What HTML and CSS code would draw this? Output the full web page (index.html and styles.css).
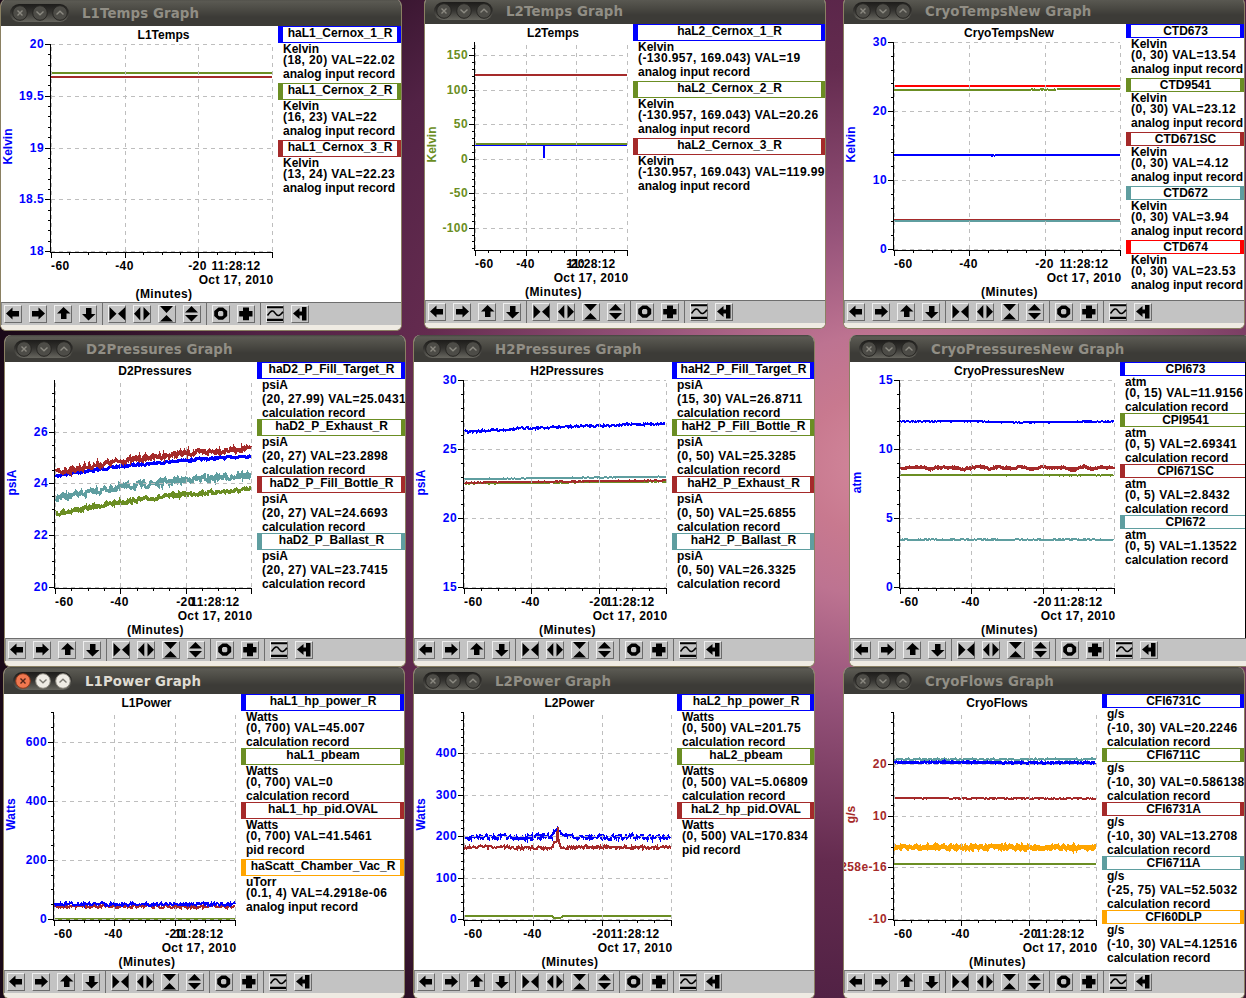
FILE: index.html
```html
<!DOCTYPE html>
<html lang="en">
<head>
    <meta charset="UTF-8">
    <meta name="viewport" content="width=device-width, initial-scale=1.0">
    <title>Graphs</title>
    <link rel="stylesheet" href="styles.css">
</head>
<body>

    <div class="desktop" id="desktop">
        <!-- The graph windows are generated by script.js -->
    </div>

    <div class="screen-edge"></div>

    <script src="script.js"></script>
</body>
</html>
```

FILE: styles.css
```css
body {
    margin: 0;
    padding: 0;
    overflow: hidden;
    font-family: "Liberation Sans", Arial, sans-serif;
}

.desktop {
    position: relative;
    width: 1246px;
    height: 998px;
    overflow: hidden;
    background: radial-gradient(900px 740px at 890px 465px, #d48a9e 0%, #c8798f 10%, #bd7391 18%, #96537a 32%, #642b4f 54%, #522245 72%, #2c1025 90%, #1a0918 100%);
}

/* Windows */
.window {
    position: absolute;
    width: 400px;
    border: 1px solid #8a8062;
    border-top: none;
    border-radius: 7px 7px 6px 6px;
    overflow: hidden;
    background: #efebe3;
}

.titlebar {
    display: flex;
    align-items: center;
    height: 27px;
    background: linear-gradient(#45443f 0, #5b5a53 2px, #4a4943 11px, #3c3b37 18px, #3c3b37 100%);
}

.window-buttons {
    display: flex;
    align-items: center;
    gap: 4px;
    height: 18px;
    margin-left: 9px;
    padding: 0 1px 0 2px;
    border-radius: 9px;
    background: linear-gradient(#1d1c1a, #33322f 45%, #67665f);
}

.window-buttons svg {
    display: block;
    width: 16px;
    height: 16px;
}

.window-title {
    margin-left: 13px;
    padding-top: 2px;
    font: bold 13.33px/25px "DejaVu Sans", sans-serif;
    letter-spacing: 0.1px;
    color: #918e85;
    white-space: nowrap;
}

.active .window-title {
    color: #dfdbd2;
}

/* Graph area */
.graph {
    display: flex;
    height: 276px;
    background: #fff;
}

.plot {
    display: block;
    flex: none;
    font-size: 12px;
    font-weight: bold;
}

.wide {
    letter-spacing: 0.4px;
}

.time {
    letter-spacing: 0.2px;
}

.axis {
    stroke: #000;
    stroke-width: 1;
    fill: none;
    shape-rendering: crispEdges;
}

.grid {
    stroke: #bebebe;
    stroke-width: 1;
    stroke-dasharray: 4 4;
    fill: none;
    shape-rendering: crispEdges;
}

.series {
    fill: none;
    shape-rendering: crispEdges;
}

/* Legend */
.legend {
    flex: 1;
    min-width: 0;
    overflow: hidden;
    font-size: 12px;
    font-weight: bold;
    line-height: 12px;
    white-space: nowrap;
}

.legend-name {
    box-sizing: border-box;
    height: 14px;
    border: 1px solid;
    border-left-width: 5px;
    border-right-width: 4px;
    text-align: center;
    display: flex;
    justify-content: center;
}

.legend-name span {
    color: #000;
}

.legend-name.deep {
    height: 17px;
}

.legend-unit {
    height: 11px;
    padding-left: 5px;
}

.legend-unit.deep {
    height: 14px;
}

.legend-value {
    height: 14px;
    padding-left: 5px;
    letter-spacing: 0.4px;
}

.legend-record {
    height: 12px;
    padding-left: 5px;
}

.legend-record.deep {
    height: 15px;
}

/* Toolbar */
.toolbar {
    display: flex;
    align-items: center;
    gap: 7px;
    box-sizing: border-box;
    height: 23px;
    padding-left: 2px;
    border-top: 1px solid #6e6e6e;
    border-left: 1px solid #8a8a8a;
    background: #c3c3c3;
}

.tool {
    display: block;
    box-sizing: border-box;
    width: 18px;
    height: 18px;
    border: 1px solid;
    border-color: #efefef #6b6b6b #6b6b6b #efefef;
}

.tool svg {
    display: block;
    width: 18px;
    height: 18px;
    margin: -1px;
}

.separator {
    width: 1px;
    height: 22px;
    margin: 0 -2px;
    background: #6e6e6e;
}

.window-foot {
    height: 5px;
    background: #efebe3;
}

.screen-edge {
    position: absolute;
    left: 1245px;
    top: 362px;
    width: 1px;
    height: 276px;
    background: #000;
}
```

FILE: script.js
```
const BLUE = '#0000ff';
const OLIVE = '#6b8e23';
const BROWN = '#a52a2a';
const TEAL = '#5f9ea0';
const RED = '#ff0000';
const ORANGE = '#ffa500';

const TOP = 18;      // first grid row inside the graph area
const HEIGHT = 207;  // height of the y axis
const LEFT = 50;     // x of the -60 minute mark

// pts: [fraction of the time axis, y], w: line width, n: noise
const windows = [
    {
        x: 1, y: 26, title: 'L1Temps', split: 277, unit: 'Kelvin', axisColor: BLUE,
        range: [18, 20], major: 0.5, minor: 0.1,
        legend: [
            [BLUE, 'haL1_Cernox_1_R', 'Kelvin', '(18, 20) VAL=22.02', 'analog input record'],
            [OLIVE, 'haL1_Cernox_2_R', 'Kelvin', '(16, 23) VAL=22', 'analog input record'],
            [BROWN, 'haL1_Cernox_3_R', 'Kelvin', '(13, 24) VAL=22.23', 'analog input record']
        ],
        series: [
            { c: OLIVE, w: 2, n: 0, pts: [[0, 47], [1, 47]] },
            { c: BROWN, w: 2, n: 0, pts: [[0, 51], [1, 51]] }
        ]
    },
    {
        x: 425, y: 24, title: 'L2Temps', split: 208, unit: 'Kelvin', axisColor: OLIVE,
        range: [-130.957, 169.043], major: 50, minor: 10,
        legend: [
            [BLUE, 'haL2_Cernox_1_R', 'Kelvin', '(-130.957, 169.043) VAL=19', 'analog input record'],
            [OLIVE, 'haL2_Cernox_2_R', 'Kelvin', '(-130.957, 169.043) VAL=20.26', 'analog input record'],
            [BROWN, 'haL2_Cernox_3_R', 'Kelvin', '(-130.957, 169.043) VAL=119.99', 'analog input record']
        ],
        series: [
            { c: BLUE, w: 2, n: 0, pts: [[0, 121], [0.454, 121], [0.454, 134], [0.455, 121], [1, 121]] },
            { c: OLIVE, w: 2, n: 0, pts: [[0, 120], [1, 120]] },
            { c: BROWN, w: 2, n: 0, pts: [[0, 51], [1, 51]] }
        ]
    },
    {
        x: 844, y: 24, title: 'CryoTempsNew', split: 282, unit: 'Kelvin', axisColor: BLUE,
        range: [0, 30], major: 10, minor: 2,
        legend: [
            [BLUE, 'CTD673', 'Kelvin', '(0, 30) VAL=13.54', 'analog input record'],
            [OLIVE, 'CTD9541', 'Kelvin', '(0, 30) VAL=23.12', 'analog input record'],
            [BROWN, 'CTD671SC', 'Kelvin', '(0, 30) VAL=4.12', 'analog input record'],
            [TEAL, 'CTD672', 'Kelvin', '(0, 30) VAL=3.94', 'analog input record'],
            [RED, 'CTD674', 'Kelvin', '(0, 30) VAL=23.53', 'analog input record']
        ],
        series: [
            { c: BLUE, w: 2, n: 0, pts: [[0, 131], [0.43, 131], [0.435, 132], [0.44, 131], [0.445, 132], [0.45, 131], [1, 131]] },
            { c: OLIVE, w: 2, n: 0, pts: [[0, 66], [0.6, 66]] },
            { c: OLIVE, w: 2, n: 0.6, pts: [[0.6, 65.5], [0.72, 65.5]] },
            { c: OLIVE, w: 2, n: 0, pts: [[0.72, 65], [1, 65]] },
            { c: BROWN, w: 2, n: 0, pts: [[0, 196], [1, 196]] },
            { c: TEAL, w: 2, n: 0, pts: [[0, 197], [1, 197]] },
            { c: RED, w: 2, n: 0, pts: [[0, 62], [1, 62]] }
        ]
    },
    {
        x: 5, y: 362, title: 'D2Pressures', split: 252, unit: 'psiA', axisColor: BLUE,
        range: [20, 27.99], major: 2, minor: 0.5,
        legend: [
            [BLUE, 'haD2_P_Fill_Target_R', 'psiA', '(20, 27.99) VAL=25.0431', 'calculation record'],
            [OLIVE, 'haD2_P_Exhaust_R', 'psiA', '(20, 27) VAL=23.2898', 'calculation record'],
            [BROWN, 'haD2_P_Fill_Bottle_R', 'psiA', '(20, 27) VAL=24.6693', 'calculation record'],
            [TEAL, 'haD2_P_Ballast_R', 'psiA', '(20, 27) VAL=23.7415', 'calculation record']
        ],
        series: [
            { c: BLUE, w: 3, n: 1.2, pts: [[0, 114], [0.33, 104.3], [0.66, 98.3], [1, 94]] },
            { c: OLIVE, w: 3, n: 2.2, pts: [[0, 151.7], [0.33, 140.3], [0.66, 132.3], [1, 127.7]] },
            { c: BROWN, w: 3, n: 3, pts: [[0, 110.5], [0.33, 99], [0.66, 91.5], [1, 86.3]] },
            { c: TEAL, w: 3, n: 3.6, pts: [[0, 136.5], [0.33, 125.3], [0.66, 118], [1, 113]] }
        ]
    },
    {
        x: 414, y: 362, title: 'H2Pressures', split: 258, unit: 'psiA', axisColor: BLUE,
        range: [15, 30], major: 5, minor: 1,
        legend: [
            [BLUE, 'haH2_P_Fill_Target_R', 'psiA', '(15, 30) VAL=26.8711', 'calculation record'],
            [OLIVE, 'haH2_P_Fill_Bottle_R', 'psiA', '(0, 50) VAL=25.3285', 'calculation record'],
            [BROWN, 'haH2_P_Exhaust_R', 'psiA', '(0, 50) VAL=25.6855', 'calculation record'],
            [TEAL, 'haH2_P_Ballast_R', 'psiA', '(0, 50) VAL=26.3325', 'calculation record']
        ],
        series: [
            { c: BLUE, w: 2, n: 1.5, pts: [[0, 70], [0.33, 66], [0.66, 63.5], [1, 61.5]] },
            { c: OLIVE, w: 2, n: 0.4, pts: [[0, 121.5], [1, 119.5]] },
            { c: BROWN, w: 2, n: 0.5, pts: [[0, 120.6], [1, 118.4]] },
            { c: TEAL, w: 2, n: 0.4, pts: [[0, 117.2], [0.35, 116.2], [1, 114.7]] }
        ]
    },
    {
        x: 850, y: 362, title: 'CryoPressuresNew', split: 270, unit: 'atm', axisColor: BLUE,
        range: [0, 15], major: 5, minor: 1,
        legend: [
            [BLUE, 'CPI673', 'atm', '(0, 15) VAL=11.9156', 'calculation record'],
            [OLIVE, 'CPI9541', 'atm', '(0, 5) VAL=2.69341', 'calculation record'],
            [BROWN, 'CPI671SC', 'atm', '(0, 5) VAL=2.8432', 'calculation record'],
            [TEAL, 'CPI672', 'atm', '(0, 5) VAL=1.13522', 'calculation record']
        ],
        series: [
            { c: BLUE, w: 2, n: 0.5, pts: [[0, 59.7], [0.3, 59], [0.5, 60.5], [0.7, 60.3], [0.85, 59.7], [1, 59.5]] },
            { c: OLIVE, w: 2, n: 0.4, pts: [[0, 113], [1, 113.4]] },
            { c: BROWN, w: 3, n: 1, pts: [[0, 106], [0.08, 105], [0.14, 106.5], [0.18, 105.3], [0.25, 105.5], [0.3, 107], [0.33, 105.8], [0.37, 104.5], [0.42, 107], [0.46, 104.5], [0.52, 107], [0.57, 104.7], [0.62, 107.5], [0.66, 104.5], [0.7, 105.8], [0.77, 105.5], [0.81, 108], [0.86, 104.5], [0.9, 107], [0.94, 105.5], [1, 105.7]] },
            { c: TEAL, w: 2, n: 0.7, pts: [[0, 177.7], [1, 177.7]] }
        ]
    },
    {
        x: 4, y: 694, title: 'L1Power', split: 237, unit: 'Watts', axisColor: BLUE, active: true,
        range: [0, 700], major: 200, minor: 50,
        legend: [
            [BLUE, 'haL1_hp_power_R', 'Watts', '(0, 700) VAL=45.007', 'calculation record'],
            [OLIVE, 'haL1_pbeam', 'Watts', '(0, 700) VAL=0', 'calculation record'],
            [BROWN, 'haL1_hp_pid.OVAL', 'Watts', '(0, 700) VAL=41.5461', 'pid record'],
            [ORANGE, 'haScatt_Chamber_Vac_R', 'uTorr', '(0.1, 4) VAL=4.2918e-06', 'analog input record']
        ],
        series: [
            { c: OLIVE, w: 2, n: 0, pts: [[0, 225], [1, 225]] },
            { c: BROWN, w: 2, n: 2, pts: [[0, 212.5], [1, 212.5]] },
            { c: BLUE, w: 2, n: 2, pts: [[0, 210], [1, 210.3]] }
        ]
    },
    {
        x: 414, y: 694, title: 'L2Power', split: 263, unit: 'Watts', axisColor: BLUE,
        range: [0, 500], major: 100, minor: 20, skipTop: true,
        legend: [
            [BLUE, 'haL2_hp_power_R', 'Watts', '(0, 500) VAL=201.75', 'calculation record'],
            [OLIVE, 'haL2_pbeam', 'Watts', '(0, 500) VAL=5.06809', 'calculation record'],
            [BROWN, 'haL2_hp_pid.OVAL', 'Watts', '(0, 500) VAL=170.834', 'pid record']
        ],
        series: [
            { c: BLUE, w: 2, n: 3.2, pts: [[0, 143], [0.425, 143], [0.435, 137.5], [0.45, 135], [0.47, 139], [0.5, 143], [1, 143.3]] },
            { c: OLIVE, w: 2, n: 0, pts: [[0, 222], [0.425, 222], [0.435, 224], [0.465, 224], [0.48, 222], [1, 222]] },
            { c: BROWN, w: 2, n: 2, pts: [[0, 153], [0.425, 154], [0.435, 148], [0.449, 147], [0.453, 134], [0.457, 147], [0.47, 153], [1, 154]] }
        ]
    },
    {
        x: 844, y: 694, title: 'CryoFlows', split: 258, unit: 'g/s', axisColor: BROWN,
        range: [-10, 30], major: 10, minor: 2, zero: '258e-16', skipTop: true,
        legend: [
            [BLUE, 'CFI6731C', 'g/s', '(-10, 30) VAL=20.2246', 'calculation record'],
            [OLIVE, 'CFI6711C', 'g/s', '(-10, 30) VAL=0.586138', 'calculation record'],
            [BROWN, 'CFI6731A', 'g/s', '(-10, 30) VAL=13.2708', 'calculation record'],
            [TEAL, 'CFI6711A', 'g/s', '(-25, 75) VAL=52.5032', 'calculation record'],
            [ORANGE, 'CFI60DLP', 'g/s', '(-10, 30) VAL=4.12516', 'calculation record']
        ],
        series: [
            { c: BLUE, w: 3, n: 0.9, pts: [[0, 68.7], [0.3, 68], [0.6, 69], [1, 68.8]] },
            { c: OLIVE, w: 2, n: 0, pts: [[0, 170], [1, 170]] },
            { c: BROWN, w: 2, n: 0.5, pts: [[0, 104.2], [1, 104.6]] },
            { c: TEAL, w: 2, n: 1, pts: [[0, 65.3], [1, 65.3]] },
            { c: ORANGE, w: 4, n: 2, pts: [[0, 153], [1, 153.8]] }
        ]
    }
];

const icons = {
    left: '<path d="M2 8.5L8.5 2.5V6H15V11.5H8.5V14.5Z"/>',
    right: '<path d="M16 8.5L9.5 2.5V6H3V11.5H9.5V14.5Z"/>',
    up: '<path d="M9.5 2L3 8.5H7V14H12.5V8.5H16.5Z"/>',
    down: '<path d="M9.5 15.5L3 9H7V3H12.5V9H16.5Z"/>',
    squeezeX: '<path d="M1.5 2V15.5L8.5 8.7ZM17.3 2V15.5L10 8.7Z"/>',
    spreadX: '<path d="M7.3 2V15.5L1 8.7ZM10.5 2V15.5L17 8.7Z"/>',
    squeezeY: '<path d="M2 1H15L8.5 8ZM2 16.5H15L8.5 10Z"/>',
    spreadY: '<path d="M2 7.5H15L8.5 1ZM2 10H15L8.5 16.5Z"/>',
    ring: '<path fill-rule="evenodd" d="M6.5 2.5H11L15.2 6V11L11 14.8H6.5L2.2 11V6ZM7.2 6L6 7.2V10.2L7.2 11.3H10.2L11.3 10.2V7.2L10.2 6Z"/>',
    plus: '<path d="M6 2.5H12V6H15.5V11.5H12V15.2H6V11.5H2.2V6H6Z"/>',
    wave: '<path d="M1 1.2H17V3.2H1ZM1 13.7H17V16H1Z"/><path fill="none" stroke="#000" stroke-width="1.5" d="M1.5 10.5C5 5.5 7 4.5 9 8C11.5 11.5 13.5 11.5 17 6.8"/>',
    stop: '<path d="M2 8.5L8.5 3V6.5H11V2H15.5V15.5H11V10.5H8.5V14Z"/>'
};

const toolbar = ['left', 'right', 'up', 'down', '|', 'squeezeX', 'spreadX', 'squeezeY', 'spreadY', '|', 'ring', 'plus', '|', 'wave', 'stop'];

let seed = 7;
function random() {
    seed = (seed * 16807) % 2147483647;
    return seed / 2147483647;
}

function linePoints(s, width) {
    if (!s.n) {
        return s.pts.map(p => `${LEFT + p[0] * width},${p[1]}`).join(' ');
    }
    const out = [];
    let drift = 0;
    for (let i = 0; i < s.pts.length - 1; i++) {
        const [a, ya] = s.pts[i];
        const [b, yb] = s.pts[i + 1];
        for (let x = a * width; x < b * width; x += 0.8) {
            const t = (x - a * width) / ((b - a) * width);
            drift = drift * 0.35 + (random() - 0.5) * s.n * 1.5;
            out.push(`${(LEFT + x).toFixed(1)},${(ya + (yb - ya) * t + drift).toFixed(1)}`);
        }
    }
    return out.join(' ');
}

function plotSvg(w) {
    const right = w.split - 6;
    const width = right - LEFT;
    const [min, max] = w.range;
    const bottom = TOP + HEIGHT;
    const yPos = v => Math.round(TOP + (max - v) * HEIGHT / (max - min)) + 0.5;
    const xPos = m => Math.round(LEFT + (60 + m) * width / 60) + 0.5;
    let grid = '';
    let ticks = '';
    let text = '';

    // y axis
    for (let i = Math.ceil(min / w.minor - 0.001); i <= max / w.minor + 0.001; i++) {
        ticks += `M47 ${yPos(i * w.minor)}H50`;
    }
    for (let i = Math.ceil(min / w.major); i <= max / w.major; i++) {
        const v = i * w.major;
        if (w.skipTop && v === max) continue;
        const y = yPos(v);
        ticks += `M44 ${y}H50`;
        grid += `M50 ${y}H${right}`;
        const label = v === 0 && w.zero ? w.zero : String(v);
        text += `<text class="wide" x="43" y="${y + 3.5}" text-anchor="end" fill="${w.axisColor}">${label}</text>`;
    }

    // x axis
    for (let m = -60; m <= 0; m += 5) {
        const major = m % 20 === 0;
        ticks += `M${xPos(m)} ${bottom + 1}V${bottom + (major ? 7 : 4)}`;
        if (major) grid += `M${xPos(m)} ${bottom}V${TOP}`;
    }
    text += `<text class="wide" x="50" y="244">-60</text>`;
    text += `<text class="wide" x="${xPos(-40) - 1}" y="244" text-anchor="middle">-40</text>`;
    text += `<text class="wide" x="${xPos(-20) - 1}" y="244" text-anchor="middle">-20</text>`;
    text += `<text class="time" x="${right - 11.5}" y="244" text-anchor="end">11:28:12</text>`;
    text += `<text class="wide" x="${right + 1.5}" y="258" text-anchor="end">Oct 17, 2010</text>`;
    text += `<text class="wide" x="${LEFT + width / 2 + 2.5}" y="272" text-anchor="middle">(Minutes)</text>`;
    text += `<text x="${LEFT + width / 2 + 2}" y="13" text-anchor="middle">${w.title}</text>`;
    text += `<text transform="translate(11 120.5) rotate(-90)" text-anchor="middle" fill="${w.axisColor}">${w.unit}</text>`;

    const lines = w.series.map(s =>
        `<polyline class="series" stroke="${s.c}" stroke-width="${s.w}" points="${linePoints(s, width)}"/>`).join('');

    return `<svg class="plot" width="${w.split}" height="276" viewBox="0 0 ${w.split} 276">
        ${lines}
        <path class="grid" d="${grid}"/>
        <path class="axis" d="${ticks}"/>
        <path class="axis" d="M49.5 ${TOP}V${bottom + 1.5}H${right}"/>
        ${text}
    </svg>`;
}

function deep(s) {
    return /[_gpqyj]/.test(s) ? ' deep' : '';
}

function legendHtml(w) {
    return w.legend.map(([color, name, unit, value, record]) => `
        <div class="legend-name${deep(name)}" style="border-color: ${color}"><span>${name}</span></div>
        <div class="legend-unit${deep(unit)}">${unit}</div>
        <div class="legend-value">${value}</div>
        <div class="legend-record${deep(record)}">${record}</div>`).join('');
}

function roundButton(kind, active) {
    const marks = { close: 'M5.5 5.5L10.5 10.5M10.5 5.5L5.5 10.5', min: 'M4.5 6.5L8 9.7L11.5 6.5', max: 'M4.5 9.5L8 6.3L11.5 9.5' };
    let fill = '#4d4c47';
    let edge = '#282724';
    let mark = '#8b8981';
    if (active) {
        fill = kind === 'close' ? '#f07850' : '#efece5';
        edge = kind === 'close' ? '#8e3a1c' : '#8a877e';
        mark = kind === 'close' ? '#52251a' : '#7c7a73';
    }
    return `<svg viewBox="0 0 16 16"><circle cx="8" cy="8" r="7.3" fill="${fill}" stroke="${edge}"/><path d="${marks[kind]}" fill="none" stroke="${mark}" stroke-width="1.4"/></svg>`;
}

function toolbarHtml() {
    return toolbar.map(name => name === '|'
        ? '<span class="separator"></span>'
        : `<span class="tool"><svg viewBox="0 0 18 18">${icons[name]}</svg></span>`).join('');
}

const desktop = document.getElementById('desktop');

windows.forEach(w => {
    const el = document.createElement('div');
    el.className = 'window' + (w.active ? ' active' : '');
    el.style.left = `${w.x - 1}px`;
    el.style.top = `${w.y - 27}px`;
    el.innerHTML = `
        <div class="titlebar">
            <div class="window-buttons">${['close', 'min', 'max'].map(k => roundButton(k, w.active)).join('')}</div>
            <div class="window-title">${w.title} Graph</div>
        </div>
        <div class="graph">
            ${plotSvg(w)}
            <div class="legend">${legendHtml(w)}</div>
        </div>
        <div class="toolbar">${toolbarHtml()}</div>
        <div class="window-foot"></div>`;
    desktop.appendChild(el);
});
```
